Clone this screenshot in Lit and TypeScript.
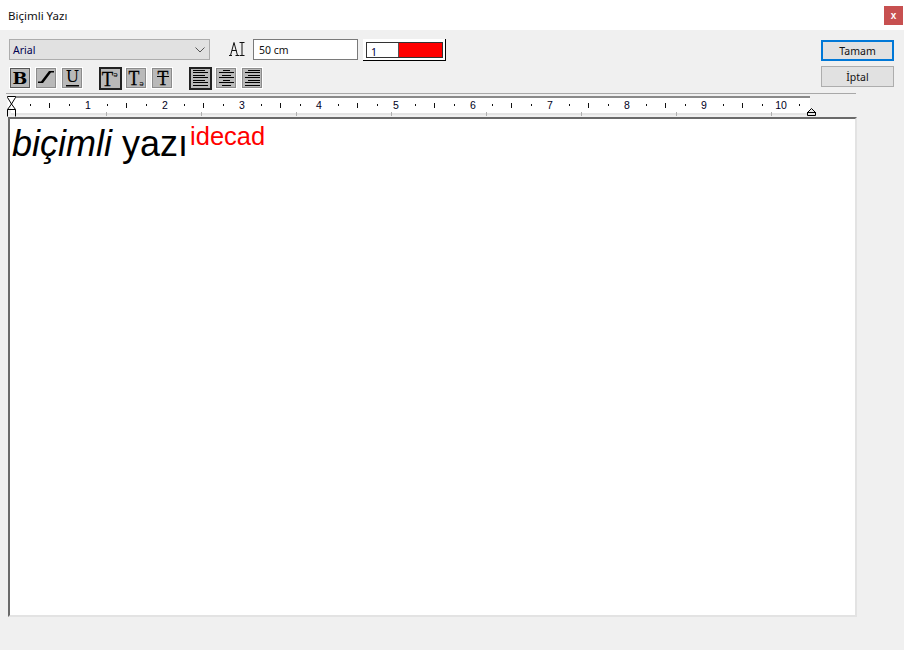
import { LitElement, html, css, svg } from "lit";
import { customElement } from "lit/decorators.js";

const nums = [1, 2, 3, 4, 5, 6, 7, 8, 9, 10];
const lineYs = [2, 4, 7, 9, 12, 14, 17];

@customElement("app-root")
export class AppRoot extends LitElement {
  static styles = css`
    :host { display: block; width: 904px; height: 650px; background: #f0f0f0; font-family: "Noto Sans", "Open Sans", sans-serif; font-size: 11px; color: #000; overflow: hidden; }
    .title { height: 30px; background: #fff; display: flex; align-items: center; justify-content: space-between; padding: 0 1px 0 8px; box-sizing: border-box; font-size: 11.5px; color: #111; }
    .close { width: 19px; height: 19px; background: #c75050; color: #fff; font: bold 10px "Liberation Sans", sans-serif; display: flex; align-items: center; justify-content: center; }
    .main { display: flex; height: 620px; }
    .left { width: 857px; padding-left: 6px; box-sizing: border-box; display: flex; flex-direction: column; }
    .right { padding-top: 10px; margin-left: -36px; width: 73px; display: flex; flex-direction: column; gap: 5px; }
    .btn { width: 73px; height: 21px; box-sizing: border-box; background: #e1e1e1; border: 1px solid #adadad; display: flex; align-items: center; justify-content: center; font-size: 10.5px; color: #111; }
    .btn.def { border: 2px solid #0078d7; }
    .row1 { display: flex; align-items: flex-start; padding: 9px 0 0 3px; height: 21px; }
    .combo { width: 201px; height: 21px; box-sizing: border-box; background: #e1e1e1; border: 1px solid #adadad; display: flex; align-items: center; justify-content: space-between; padding: 0 4px 0 3px; font-size: 10.5px; color: #000050; }
    .ai { margin: 3px 0 0 19px; width: 16px; height: 14px; display: block; }
    .input { margin-left: 8px; width: 105px; height: 21px; box-sizing: border-box; background: #fff; border: 1px solid #7a7a7a; padding-left: 5px; display: flex; align-items: center; font-size: 10.5px; color: #111; }
    .swatch { margin-left: 5px; width: 83px; height: 22px; box-sizing: border-box; background: #fff; border-right: 1px solid #000; border-bottom: 1px solid #000; padding: 3px 2px 2px 3px; }
    .swatch-in { display: flex; height: 100%; box-sizing: border-box; border: 1px solid #333; }
    .swatch-n { width: 31px; font-size: 10.5px; padding: 3px 0 0 4px; box-sizing: border-box; color: #000040; line-height: 13px; background: #fff; }
    .swatch-c { flex: 1; background: #f00; border-left: 1px solid #555; }
    .row2 { display: flex; padding: 7px 0 0 3px; height: 22px; align-items: flex-start; }
    .group { display: flex; gap: 4px; margin-right: 16px; align-items: flex-start; }
    .tb { width: 22px; height: 22px; box-sizing: border-box; background: #b9b9b9; border: 1px solid #fff; box-shadow: inset 0 0 0 1px #8c8c8c; display: block; }
    .tb svg { display: block; width: 20px; height: 20px; overflow: visible; }
    .tb.first { box-shadow: inset 0 0 0 1px #555; }
    .tb.on { width: 23px; height: 23px; margin-right: -1px; border: 2px solid #222; box-shadow: none; }
    .tb.on svg { margin: -1px; }
    .glyph { font-family: "Liberation Serif", serif; fill: #000; stroke: #000; stroke-width: 0.3px; }
    .slab { font-family: "DejaVu Serif", serif; fill: #000; }
    .small { font-family: "Liberation Sans", "DejaVu Sans", sans-serif; font-size: 8px; fill: #000; }
    .sep { width: 850px; height: 1px; background: #a8a8a8; margin-top: 4px; }
    .rulerbox { height: 21px; margin-top: 2px; }
    .rulerbox svg { display: block; }
    .rt { font: 10.5px "Liberation Sans", sans-serif; fill: #002; text-anchor: middle; }
    .editor { margin-left: 2px; width: 849px; height: 500px; box-sizing: border-box; background: #fff; border-top: 2px solid #6a6a6a; border-left: 2px solid #6a6a6a; border-right: 2px solid #e3e3e3; border-bottom: 2px solid #e3e3e3; font-family: "Liberation Sans", Arial, sans-serif; padding: 3px 0 0 2px; }
    .line { font-size: 36px; line-height: 44px; white-space: nowrap; color: #000; }
    .line i { font-style: italic; }
    .line .sup { color: #f00; font-size: 25.5px; position: relative; top: -11px; margin-left: 2px; }
  `;

  alignIcon(spans: [number, number][]) {
    return html`<svg viewBox="0 0 20 20">
      ${spans.map(([a, b], i) => svg`<line x1=${a} x2=${b} y1=${lineYs[i] + 0.5} y2=${lineYs[i] + 0.5} stroke="#000" />`)}
    </svg>`;
  }

  ruler() {
    const ticks: unknown[] = [];
    for (let i = 0; i < 10; i++) {
      const c = 43 + i * 77;
      ticks.push(svg`<rect x=${c - 19} y="8" width="1" height="2" fill="#111" />`);
      ticks.push(svg`<rect x=${c} y="7" width="1" height="5" fill="#111" />`);
      ticks.push(svg`<rect x=${c + 20} y="8" width="1" height="2" fill="#111" />`);
    }
    ticks.push(svg`<rect x="793" y="8" width="1" height="2" fill="#111" />`);
    const low = [100, 195, 290, 385, 480, 575, 670, 765];
    return html`<svg width="851" height="21" viewBox="0 0 851 21">
      <rect x="5" y="0" width="799" height="17" fill="#fff" />
      <rect x="5" y="0" width="799" height="2" fill="#8a8a8a" />
      <rect x="5" y="17" width="799" height="2" fill="#e4e4e4" />
      ${ticks}
      ${low.map((x) => svg`<rect x=${x} y="16" width="1" height="4" fill="#b0b0b0" />`)}
      ${nums.map((n, i) => svg`<text class="rt" x=${82 + i * 77} y="13">${n}</text>`)}
      <path d="M1.5 0.5H9.5V1.5L5.5 8L9.5 13.5V20.5M1.5 20.5V13.5L5.5 8L1.5 1.5V0.5M1.5 13.5H9.5" fill="#fff" stroke="#000" />
      <path d="M801.5 16.5L805.5 12.5L809.5 16.5V19.5H801.5Z" fill="#e8e8e8" stroke="#000" />
      <line x1="801" x2="810" y1="16.5" y2="16.5" stroke="#000" />
    </svg>`;
  }

  render() {
    const l1: [number, number][] = [[3, 15], [3, 18], [3, 15], [3, 18], [3, 15], [3, 18], [3, 18]];
    const l2: [number, number][] = [[7, 14], [3, 18], [6, 15], [3, 18], [7, 14], [3, 18], [6, 15]];
    const l3: [number, number][] = [[6, 18], [3, 18], [6, 18], [3, 18], [6, 18], [3, 18], [3, 18]];
    return html`
      <div class="title"><span>Biçimli Yazı</span><span class="close">x</span></div>
      <div class="main">
        <div class="left">
          <div class="row1">
            <div class="combo"><span>Arial</span>
              <svg width="10" height="6" viewBox="0 0 10 6"><path d="M0.5 0.5L5 5L9.5 0.5" fill="none" stroke="#555" /></svg>
            </div>
            <svg class="ai" viewBox="0 0 16 14">
              <path d="M0 13.5H3M6.5 13.5H10M1.5 13.5L5 0.5L8.5 13.5M3 8.5H7.5M10.5 .5H15.5M13 .5V13.5M10.5 13.5H15.5" fill="none" stroke="#111" />
            </svg>
            <div class="input">50 cm</div>
            <div class="swatch"><div class="swatch-in"><div class="swatch-n">1</div><div class="swatch-c"></div></div></div>
          </div>
          <div class="row2">
            <div class="group">
              <div class="tb first"><svg viewBox="0 0 20 20"><text class="slab" x="10" y="15.5" font-size="17.5" font-weight="700" text-anchor="middle">B</text></svg></div>
              <div class="tb"><svg viewBox="0 0 20 20"><path d="M2 15V13.5H5L13 3H18V4.5H15L7 15Z" fill="#000" /></svg></div>
              <div class="tb"><svg viewBox="0 0 20 20"><text class="slab" x="10.5" y="14" font-size="16" text-anchor="middle">U</text><rect x="4" y="17" width="13" height="1.5" fill="#000" /></svg></div>
            </div>
            <div class="group">
              <div class="tb on"><svg viewBox="0 0 20 20"><text class="glyph" transform="translate(7.5 18) scale(.85 1)" font-size="22" text-anchor="middle">T</text><text class="small" x="15.5" y="9" text-anchor="middle">ə</text></svg></div>
              <div class="tb"><svg viewBox="0 0 20 20"><text class="glyph" transform="translate(8 17) scale(.85 1)" font-size="21" text-anchor="middle">T</text><text class="small" x="15.5" y="18" text-anchor="middle">ə</text></svg></div>
              <div class="tb"><svg viewBox="0 0 20 20"><text class="glyph" transform="translate(11 17) scale(.85 1)" font-size="21" text-anchor="middle">T</text><rect x="5" y="8" width="12" height="1" fill="#000" /></svg></div>
            </div>
            <div class="group">
              <div class="tb on">${this.alignIcon(l1)}</div>
              <div class="tb">${this.alignIcon(l2)}</div>
              <div class="tb">${this.alignIcon(l3)}</div>
            </div>
          </div>
          <div class="sep"></div>
          <div class="rulerbox">${this.ruler()}</div>
          <div class="editor"><div class="line"><i>biçimli</i> yazı<span class="sup">idecad</span></div></div>
        </div>
        <div class="right">
          <div class="btn def">Tamam</div>
          <div class="btn">İptal</div>
        </div>
      </div>
    `;
  }
}
